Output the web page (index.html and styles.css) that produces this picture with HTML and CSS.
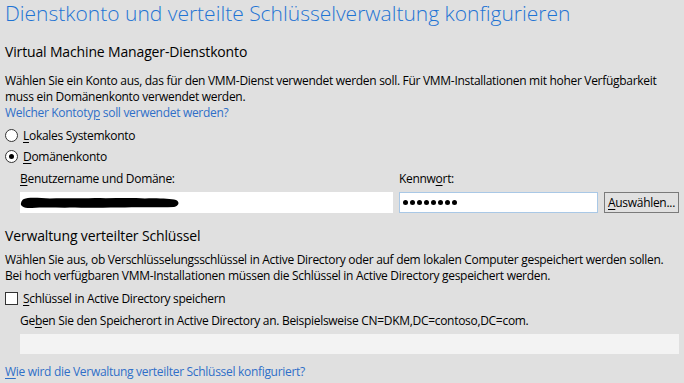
FILE: index.html
```html
<!DOCTYPE html>
<html lang="de">
<head>
  <meta charset="UTF-8">
  <title>Dienstkonto konfigurieren</title>
  <link rel="stylesheet" href="styles.css">
</head>
<body>
  <div class="page">
    <h1 class="title">Dienstkonto und verteilte Schlüsselverwaltung konfigurieren</h1>

    <h2 class="section">Virtual Machine Manager-Dienstkonto</h2>
    <p class="text">Wählen Sie ein Konto aus, das für den VMM-Dienst verwendet werden soll. Für VMM-Installationen mit hoher Verfügbarkeit muss ein Domänenkonto verwendet werden.</p>
    <a class="link" href="#">Welcher Kontoty<u>p</u> soll verwendet werden?</a>

    <div class="options">
      <label class="option"><span class="radio"></span><span><u>L</u>okales Systemkonto</span></label>
      <label class="option"><span class="radio checked"></span><span><u>D</u>omänenkonto</span></label>
    </div>

    <div class="fields">
      <span class="field-label"><u>B</u>enutzername und Domäne:</span>
      <span class="field-label">Kennw<u>o</u>rt:</span>
      <span></span>
      <div class="box">
        <svg class="redact" width="160" height="14" viewBox="0 0 160 14">
          <path d="M4 3 C8 1 20 2 30 2.5 C45 1.5 60 3 75 2 C90 2.5 110 1.5 125 2.5 C140 2 150 3 156 4 C160 6 159 10 154 11 C140 12 120 10.5 105 11.5 C90 11 70 12.5 55 11.5 C40 12 25 11 12 12 C4 12.5 0 10 1 7 C1.5 5 2.5 3.5 4 3 Z" fill="#000"/>
        </svg>
      </div>
      <div class="box focused">
        <span class="dot"></span><span class="dot"></span><span class="dot"></span><span class="dot"></span>
        <span class="dot"></span><span class="dot"></span><span class="dot"></span><span class="dot"></span>
      </div>
      <button class="btn"><u>A</u>uswählen...</button>
    </div>

    <h2 class="section second">Verwaltung verteilter Schlüssel</h2>
    <p class="text tight">Wählen Sie aus, ob Verschlüsselungsschlüssel in Active Directory oder auf dem lokalen Computer gespeichert werden sollen. Bei hoch verfügbaren VMM-Installationen müssen die Schlüssel in Active Directory gespeichert werden.</p>

    <label class="option check-row"><span class="check"></span><span><u>S</u>chlüssel in Active Directory speichern</span></label>

    <div class="indent">
      <span class="field-label">Ge<u>b</u>en Sie den Speicherort in Active Directory an. Beispielsweise CN=DKM,DC=contoso,DC=com.</span>
      <div class="box disabled"></div>
    </div>

    <a class="link bottom" href="#"><u>W</u>ie wird die Verwaltung verteilter Schlüssel konfiguriert?</a>
  </div>
</body>
</html>
```

FILE: styles.css
```css
:root {
  --bg: #e0e0e0;
  --title: #1f74d4;
  --link: #2f6fc8;
  --text: #000000;
}
body {
  margin: 0;
  background: var(--bg);
  font-family: 'Open Sans', 'Noto Sans', sans-serif;
  font-size: 12px;
  color: var(--text);
}
u { text-decoration: underline; text-underline-offset: 2px; }
.page { padding: 0 5px; display: flex; flex-direction: column; align-items: flex-start; }
.title {
  margin: 0;
  font-size: 21px;
  font-weight: 300;
  line-height: 27px;
  color: var(--title);
}
.section {
  margin: 15px 0 0;
  font-size: 14px;
  font-weight: 400;
  line-height: 20px;
  letter-spacing: -0.15px;
}
.section.second { margin-top: 13px; }
.text { margin: 11px 0 0; line-height: 16px; letter-spacing: -0.3px; }
.text.tight { margin-top: 6px; }
.link {
  color: var(--link);
  text-decoration: none;
  line-height: 16px;
  letter-spacing: -0.3px;
}
.options { margin-top: 4px; display: flex; flex-direction: column; }
.option {
  display: flex; align-items: center; gap: 5px;
  height: 21px;
  letter-spacing: -0.3px;
}
.radio {
  width: 11px; height: 11px;
  border: 1px solid #333;
  border-radius: 50%;
  background: #fff;
  display: flex; align-items: center; justify-content: center;
}
.radio.checked::after {
  content: ""; width: 5px; height: 5px; border-radius: 50%; background: #000;
}
.check { width: 11px; height: 11px; border: 1px solid #333; background: #fff; }
.fields {
  align-self: stretch;
  margin: 4px 0 0 15px;
  display: grid;
  grid-template-columns: 1fr 199px 75px;
  column-gap: 6px;
  row-gap: 5px;
}
.field-label { line-height: 16px; letter-spacing: -0.3px; }
.box {
  height: 21px;
  box-sizing: border-box;
  background: #fff;
  border: 1px solid #fff;
  display: flex; align-items: center;
}
.box.focused { border-color: #a9c8e6; padding-left: 3px; gap: 2px; }
.redact { margin-left: -1px; }
.dot { width: 5px; height: 5px; border-radius: 50%; background: #000; }
.btn {
  height: 21px;
  padding: 0;
  border: 1px solid #7a7a7a;
  background: #e1e1e1;
  font: inherit;
  letter-spacing: -0.3px;
  color: #000;
}
.check-row { margin-top: 4px; }
.indent {
  align-self: stretch;
  margin: 4px 0 0 15px;
  display: flex; flex-direction: column; gap: 5px;
}
.box.disabled { background: #f3f3f3; border-color: #f3f3f3; height: 20px; }
.link.bottom { margin-top: 10px; }
```
